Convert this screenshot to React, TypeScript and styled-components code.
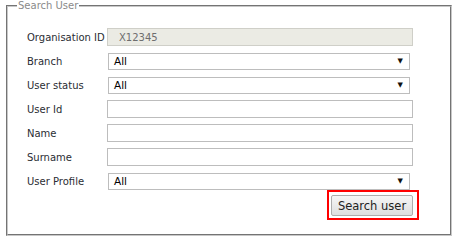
import React from "react";
import { styled, createGlobalStyle } from "styled-components";

const GlobalStyle = createGlobalStyle`
  html, body {
    margin: 0;
    padding: 0;
    background: #ffffff;
  }
  body {
    font-family: "DejaVu Sans", Verdana, sans-serif;
    font-size: 10px;
    color: #2b2b2b;
  }
`;

const SearchFieldset = styled.fieldset`
  box-sizing: border-box;
  width: 446px;
  margin: 0 0 0 6px;
  padding: 16px 31px 14px 19px;
  border: 2px groove #c8c8c8;
  min-width: 0;
`;

const Legend = styled.legend`
  padding: 0 1px;
  margin-left: -10px;
  font-size: 10px;
  line-height: 12px;
  color: #8a8a8a;
`;

const FormGrid = styled.div`
  display: grid;
  grid-template-columns: 80px 1fr;
  grid-auto-rows: 18px;
  row-gap: 6px;
  align-items: center;
`;

const Label = styled.label`
  font-size: 10px;
  color: #2a2d33;
  white-space: nowrap;
`;

const TextBox = styled.div<{ $disabled?: boolean }>`
  box-sizing: border-box;
  width: 306px;
  height: 18px;
  display: flex;
  align-items: center;
  padding-left: ${(p) => (p.$disabled ? "11px" : "4px")};
  border: 1px solid ${(p) => (p.$disabled ? "#cfcfc8" : "#bdbdbd")};
  background: ${(p) => (p.$disabled ? "#ebebe4" : "#ffffff")};
  color: ${(p) => (p.$disabled ? "#6e6e6e" : "#111")};
  font-size: 10px;
`;

const SelectBox = styled.div`
  box-sizing: border-box;
  width: 302px;
  height: 17px;
  margin-left: 1px;
  display: flex;
  align-items: center;
  justify-content: space-between;
  padding: 0 6px 0 5px;
  border: 1px solid #bdbdbd;
  background: #ffffff;
  color: #000;
  font-size: 10.5px;
`;

const Arrow = styled.span`
  font-size: 7px;
  color: #111;
`;

const ButtonRow = styled.div`
  display: flex;
  justify-content: flex-end;
`;

const Highlight = styled.div`
  box-sizing: border-box;
  width: 92px;
  height: 30px;
  border: 2px solid #ff0000;
  padding: 3px 0 0 2px;
`;

const SearchButton = styled.button`
  box-sizing: border-box;
  width: 82px;
  height: 21px;
  padding: 0;
  border: 1px solid #adadad;
  border-radius: 2px;
  background: linear-gradient(#f6f6f6, #dedede);
  font-family: "DejaVu Sans", Verdana, sans-serif;
  font-size: 11.5px;
  color: #222;
  cursor: pointer;
`;

const Select = ({ value }: { value: string }) => (
  <SelectBox>
    <span>{value}</span>
    <Arrow>▼</Arrow>
  </SelectBox>
);

const App = () => {
  return (
    <>
      <GlobalStyle />
      <SearchFieldset>
        <Legend>Search User</Legend>
        <FormGrid>
          <Label>Organisation ID</Label>
          <TextBox $disabled>X12345</TextBox>
          <Label>Branch</Label>
          <Select value="All" />
          <Label>User status</Label>
          <Select value="All" />
          <Label>User Id</Label>
          <TextBox />
          <Label>Name</Label>
          <TextBox />
          <Label>Surname</Label>
          <TextBox />
          <Label>User Profile</Label>
          <Select value="All" />
        </FormGrid>
        <ButtonRow>
          <Highlight>
            <SearchButton>Search user</SearchButton>
          </Highlight>
        </ButtonRow>
      </SearchFieldset>
    </>
  );
};

export default App;
